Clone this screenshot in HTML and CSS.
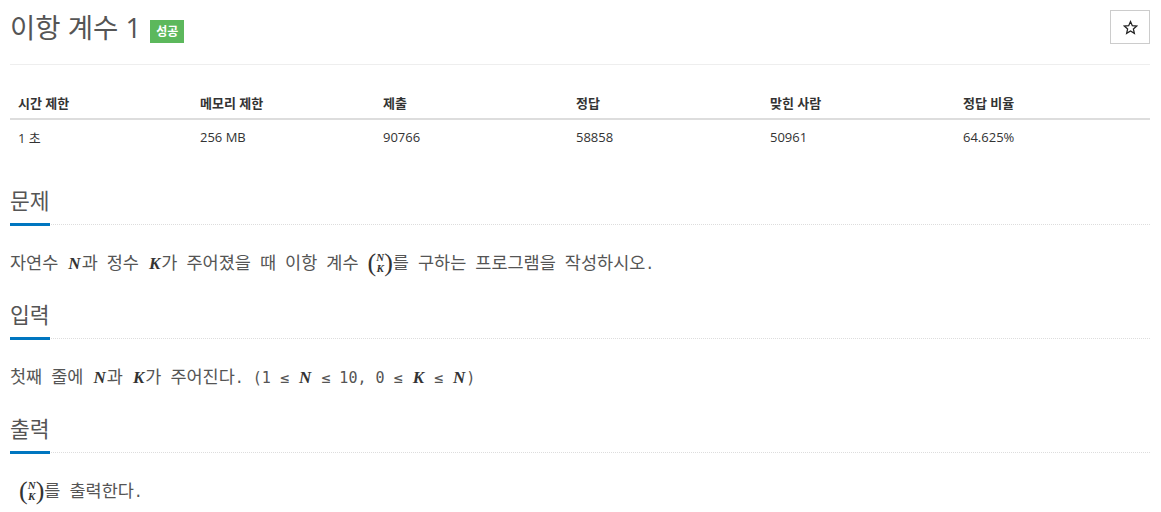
FILE: index.html
```html
<!DOCTYPE html>
<html lang="ko">
<head>
<meta charset="utf-8">
<title>이항 계수 1</title>
<link rel="stylesheet" href="styles.css">
</head>
<body>
<div class="page">
  <div class="page-header">
    <h1 class="title">이항 계수 1 <span class="label">성공</span></h1>
    <button class="star-btn" type="button" aria-label="즐겨찾기">
      <svg width="15" height="15" viewBox="0 0 24 24"><path d="M12 2.5l2.9 6.6 7.1.6-5.4 4.7 1.6 7-6.2-3.7-6.2 3.7 1.6-7L2 9.7l7.1-.6z" fill="none" stroke="#222" stroke-width="2" stroke-linejoin="miter"/></svg>
    </button>
  </div>

  <table class="info">
    <thead>
      <tr>
        <th class="c1">시간 제한</th>
        <th class="c2">메모리 제한</th>
        <th class="c3">제출</th>
        <th class="c4">정답</th>
        <th class="c5">맞힌 사람</th>
        <th class="c6">정답 비율</th>
      </tr>
    </thead>
    <tbody>
      <tr>
        <td>1 초</td>
        <td>256 MB</td>
        <td>90766</td>
        <td>58858</td>
        <td>50961</td>
        <td>64.625%</td>
      </tr>
    </tbody>
  </table>

  <section class="problem-section">
    <div class="headline"><h2>문제</h2></div>
    <p class="problem-text"><span class="ko">자연수</span> <i class="m">N</i><span class="ko">과</span> <span class="ko">정수</span> <i class="m">K</i><span class="ko">가</span> <span class="ko">주어졌을</span> <span class="ko">때</span> <span class="ko">이항</span> <span class="ko">계수</span> <span class="binom"><span class="paren">(</span><span class="frac"><i>N</i><i>K</i></span><span class="paren">)</span></span><span class="ko">를</span> <span class="ko">구하는</span> <span class="ko">프로그램을</span> <span class="ko">작성하시오</span>.</p>
  </section>

  <section class="problem-section">
    <div class="headline"><h2>입력</h2></div>
    <p class="problem-text"><span class="ko">첫째</span> <span class="ko">줄에</span> <i class="m">N</i><span class="ko">과</span> <i class="m">K</i><span class="ko">가</span> <span class="ko">주어진다</span>. (1 ≤ <i class="m">N</i> ≤ 10, 0 ≤ <i class="m">K</i> ≤ <i class="m">N</i>)</p>
  </section>

  <section class="problem-section">
    <div class="headline"><h2>출력</h2></div>
    <p class="problem-text indent"><span class="binom"><span class="paren">(</span><span class="frac"><i>N</i><i>K</i></span><span class="paren">)</span></span><span class="ko">를</span> <span class="ko">출력한다</span>.</p>
  </section>
</div>
</body>
</html>
```

FILE: styles.css
```css
html, body {
  margin: 0;
  padding: 0;
  background: #fff;
}

body {
  font-family: "Open Sans", "Noto Sans CJK KR", sans-serif;
  color: #333;
  font-size: 13px;
}

.page {
  padding: 0 11px 0 10px;
}

.page-header {
  display: flex;
  justify-content: space-between;
  align-items: flex-start;
  padding-top: 10px;
  padding-bottom: 18px;
  border-bottom: 1px solid #eee;
}

.title {
  margin: 0;
  font-size: 27.5px;
  font-weight: 400;
  line-height: 36px;
  color: #555;
  display: flex;
  align-items: center;
}

.label {
  display: inline-block;
  background: #5cb85c;
  color: #fff;
  font-size: 12px;
  font-weight: 700;
  line-height: 23px;
  padding: 0 6px;
  margin-left: 9px;
  margin-top: 6px;
}

.star-btn {
  width: 40px;
  height: 34px;
  border: 1px solid #ccc;
  background: #fff;
  padding: 0;
  display: flex;
  align-items: center;
  justify-content: center;
  cursor: pointer;
}

.info {
  width: 100%;
  border-collapse: collapse;
  margin-top: 22px;
  margin-bottom: 33px;
}

.info th,
.info td {
  text-align: left;
  padding: 0 8px;
  font-size: 13px;
}

.info th {
  font-weight: 700;
  height: 31px;
  border-bottom: 2px solid #ddd;
  color: #333;
}

.info td {
  height: 34px;
  color: #333;
}

.c1 { width: 166px; }
.c2 { width: 167px; }
.c3 { width: 177px; }
.c4 { width: 178px; }
.c5 { width: 177px; }

.headline {
  border-bottom: 1px dotted #ddd;
  margin-top: 24px;
}

.headline h2 {
  display: inline-block;
  margin: 0 0 -2px 0;
  font-size: 21.5px;
  font-weight: 400;
  line-height: 28px;
  color: #555;
  padding-bottom: 8px;
  border-bottom: 3px solid #0076c0;
}

.problem-text {
  margin: 22px 0 0 0;
  font-family: "DejaVu Sans Mono", "Noto Sans CJK KR", monospace;
  font-size: 15px;
  line-height: 30px;
  height: 30px;
  color: #555;
  white-space: nowrap;
}

.ko {
  font-family: "Noto Sans CJK KR", sans-serif;
  font-size: 17.5px;
}

.indent {
  padding-left: 9px;
}

.m,
.frac i {
  font-family: "Liberation Serif", "DejaVu Serif", serif;
  font-style: italic;
  font-weight: 700;
  color: #333;
}

.m {
  font-size: 17px;
  padding: 0 1px;
}

.binom {
  display: inline-flex;
  align-items: center;
  vertical-align: middle;
  margin-top: -4px;
  height: 24px;
}

.paren {
  font-family: "Liberation Serif", serif;
  font-size: 26px;
  line-height: 24px;
  color: #333;
}

.frac {
  display: inline-flex;
  flex-direction: column;
  align-items: center;
  line-height: 11px;
  font-size: 11px;
}
```
